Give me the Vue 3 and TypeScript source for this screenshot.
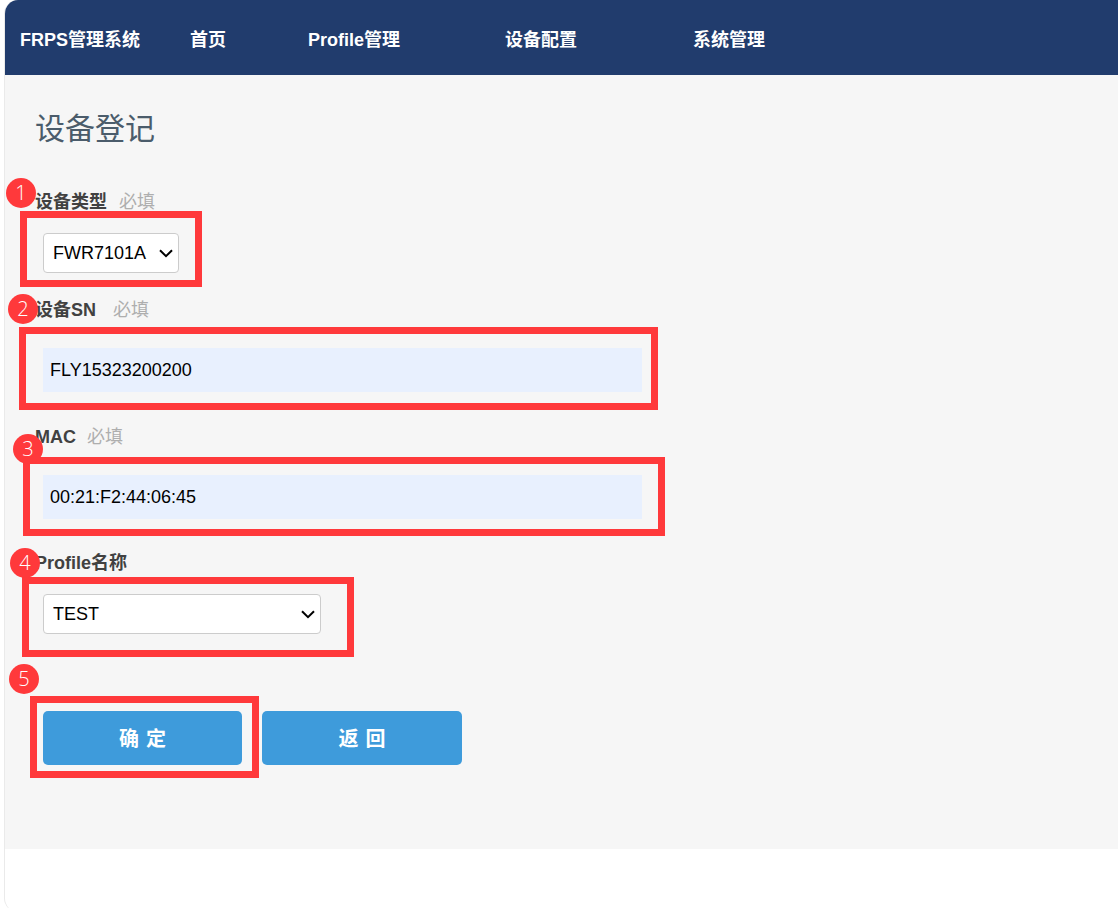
<script setup lang="ts">
const nav = [
  { label: '首页', width: 118 },
  { label: 'Profile管理', width: 197 },
  { label: '设备配置', width: 188 },
  { label: '系统管理', width: 120 },
]
const marks = [
  { n: 1, x: 6, y: 178 },
  { n: 2, x: 8, y: 294 },
  { n: 3, x: 13, y: 434 },
  { n: 4, x: 10, y: 548 },
  { n: 5, x: 9, y: 664 },
]
const boxes = [
  { x: 20, y: 211, w: 182, h: 76 },
  { x: 19, y: 327, w: 639, h: 83 },
  { x: 23, y: 457, w: 642, h: 79 },
  { x: 22, y: 577, w: 332, h: 80 },
  { x: 30, y: 696, w: 229, h: 82 },
]
</script>

<template>
  <div class="page">
    <div class="frame">
      <header class="top">
        <span class="brand">FRPS管理系统</span>
        <nav class="nav">
          <a v-for="item in nav" :key="item.label" class="link" :style="{ width: item.width + 'px' }">{{ item.label }}</a>
        </nav>
      </header>
      <main class="content">
        <h1 class="title">设备登记</h1>
        <form class="form" @submit.prevent>
          <div class="field f1">
            <label class="label"><b>设备类型</b><span class="req">必填</span></label>
            <div class="sel-wrap sel-type">
              <select class="sel">
                <option>FWR7101A</option>
              </select>
              <svg class="chev" width="14" height="9" viewBox="0 0 14 9" aria-hidden="true">
                <path d="M1 1.2 L7 7.2 L13 1.2" fill="none" stroke="#000" stroke-width="2" />
              </svg>
            </div>
          </div>
          <div class="field f2">
            <label class="label"><b>设备SN</b><span class="req req-wide">必填</span></label>
            <input class="inp" value="FLY15323200200" />
          </div>
          <div class="field f3">
            <label class="label"><b>MAC</b><span class="req req-narrow">必填</span></label>
            <input class="inp" value="00:21:F2:44:06:45" />
          </div>
          <div class="field f4">
            <label class="label"><b>Profile名称</b></label>
            <div class="sel-wrap sel-profile">
              <select class="sel">
                <option>TEST</option>
              </select>
              <svg class="chev" width="14" height="9" viewBox="0 0 14 9" aria-hidden="true">
                <path d="M1 1.2 L7 7.2 L13 1.2" fill="none" stroke="#000" stroke-width="2" />
              </svg>
            </div>
          </div>
          <div class="actions">
            <button class="btn" type="button">确 定</button>
            <button class="btn btn-back" type="button">返 回</button>
          </div>
        </form>
      </main>
    </div>
    <div
      v-for="b in boxes"
      :key="b.y"
      class="box"
      :style="{ left: b.x + 'px', top: b.y + 'px', width: b.w + 'px', height: b.h + 'px' }"
    ></div>
    <div
      v-for="m in marks"
      :key="m.n"
      class="mark"
      :style="{ left: m.x + 'px', top: m.y + 'px' }"
    >{{ m.n }}</div>
  </div>
</template>

<style scoped>
.page {
  position: relative;
  width: 1118px;
  height: 908px;
  overflow: hidden;
  background: #fff;
  font-family: "Liberation Sans", "Noto Sans CJK SC", sans-serif;
}
.frame {
  box-sizing: border-box;
  margin-left: 4px;
  width: 1120px;
  height: 912px;
  border-left: 1px solid #eaeaea;
  border-radius: 14px 0 0 14px;
  overflow: hidden;
  display: flex;
  flex-direction: column;
}
.top {
  height: 75px;
  flex: none;
  background: #213c6d;
  color: #fff;
  display: flex;
  align-items: center;
  padding-left: 15px;
  font-size: 18px;
  font-weight: 700;
}
.brand {
  width: 170px;
}
.nav {
  display: flex;
}
.link {
  display: block;
}
.content {
  height: 774px;
  flex: none;
  box-sizing: border-box;
  background: #f6f6f6;
  padding: 33px 0 0 30px;
}
.title {
  margin: 0;
  font-size: 30px;
  line-height: 42px;
  font-weight: 400;
  color: #4b5c6b;
}
.form {
  display: flex;
  flex-direction: column;
}
.field {
  display: flex;
  flex-direction: column;
  align-items: flex-start;
}
.f1 { margin-top: 39px; }
.f2 { margin-top: 24px; }
.f3 { margin-top: 32px; }
.f4 { margin-top: 31px; }
.label {
  font-size: 18px;
  line-height: 26px;
  color: #414141;
}
.req {
  margin-left: 12px;
  color: #aeaeae;
}
.req-wide {
  margin-left: 17px;
}
.req-narrow {
  margin-left: 11px;
}
.sel-wrap {
  position: relative;
  margin: 18px 0 0 8px;
  height: 40px;
}
.sel-type { width: 136px; }
.sel-profile { width: 278px; }
.sel {
  display: block;
  box-sizing: border-box;
  width: 100%;
  height: 40px;
  padding: 0 24px 0 9px;
  appearance: none;
  background: #fff;
  border: 1px solid #ccc;
  border-radius: 4px;
  color: #000;
  font-family: inherit;
  font-size: 18px;
}
.chev {
  position: absolute;
  right: 6px;
  top: 16px;
  pointer-events: none;
}
.inp {
  box-sizing: border-box;
  margin: 25px 0 0 8px;
  width: 599px;
  height: 44px;
  padding: 0 7px;
  border: 0;
  outline: 0;
  background: #e8f0fe;
  color: #000;
  font-family: inherit;
  font-size: 18px;
}
.actions {
  display: flex;
  gap: 20px;
  margin: 77px 0 0 8px;
}
.btn {
  width: 199px;
  height: 54px;
  padding: 0 0 2px;
  border: 0;
  border-radius: 5px;
  background: #3e9bdb;
  color: #fff;
  font-family: inherit;
  font-size: 20px;
  font-weight: 700;
  word-spacing: 1.5px;
}
.btn-back {
  width: 200px;
}
.box {
  position: absolute;
  box-sizing: border-box;
  border: 7px solid #ff393b;
}
.mark {
  position: absolute;
  width: 30px;
  height: 30px;
  border-radius: 50%;
  background: #ff393b;
  color: #fff;
  font-family: "Open Sans", sans-serif;
  font-size: 20px;
  font-weight: 300;
  line-height: 29px;
  text-align: center;
}
</style>
